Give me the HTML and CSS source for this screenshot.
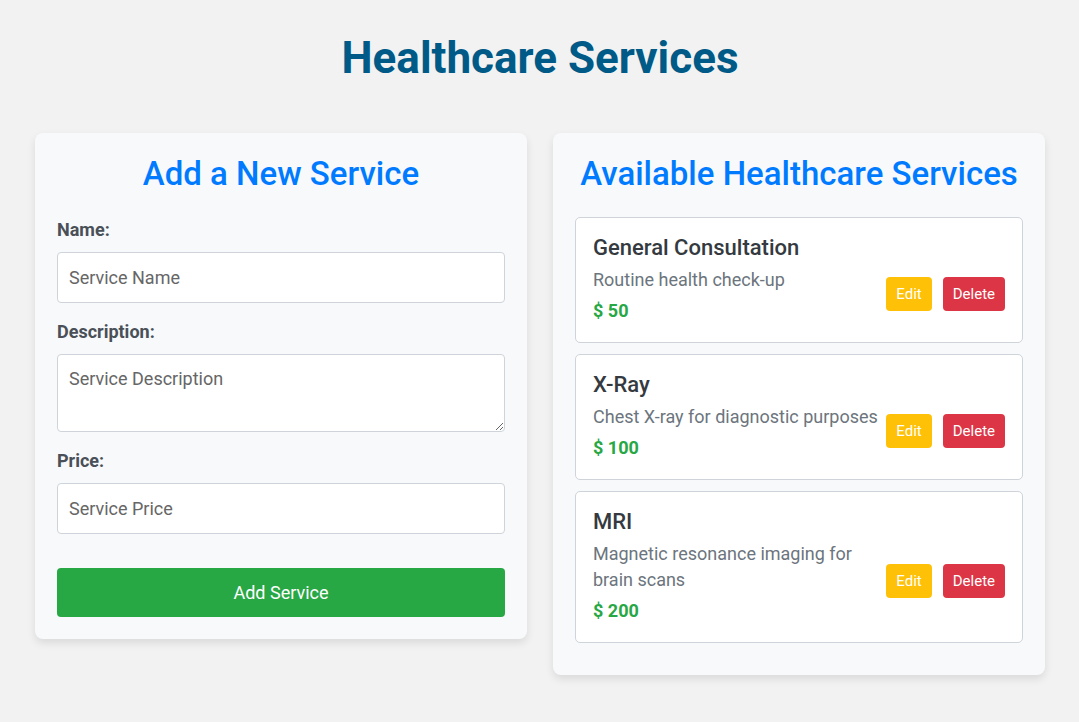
FILE: index.html
```
<!DOCTYPE html>
<html lang="en">
<head>
<meta charset="utf-8">
<meta name="viewport" content="width=device-width, initial-scale=1">
<title>Healthcare Services</title>
<link rel="stylesheet" href="styles.css">
</head>
<body>
<main class="page">
  <h1 class="page-title">Healthcare Services</h1>
  <div class="columns">
    <section class="panel">
      <h2 class="panel-title">Add a New Service</h2>
      <form class="form">
        <div class="field">
          <label class="label" for="name">Name:</label>
          <input class="control" id="name" type="text" placeholder="Service Name">
        </div>
        <div class="field">
          <label class="label" for="description">Description:</label>
          <textarea class="control control-area" id="description" placeholder="Service Description"></textarea>
        </div>
        <div class="field">
          <label class="label" for="price">Price:</label>
          <input class="control" id="price" type="text" placeholder="Service Price">
        </div>
        <button class="submit" type="submit">Add Service</button>
      </form>
    </section>
    <section class="panel">
      <h2 class="panel-title">Available Healthcare Services</h2>
      <ul class="services">
        <li class="service">
          <div class="info">
            <h3 class="service-name">General Consultation</h3>
            <p class="service-text">Routine health check-up</p>
            <p class="service-price">$ 50</p>
          </div>
          <div class="actions">
            <button class="btn btn-edit" type="button">Edit</button>
            <button class="btn btn-delete" type="button">Delete</button>
          </div>
        </li>
        <li class="service">
          <div class="info">
            <h3 class="service-name">X-Ray</h3>
            <p class="service-text">Chest X-ray for diagnostic purposes</p>
            <p class="service-price">$ 100</p>
          </div>
          <div class="actions">
            <button class="btn btn-edit" type="button">Edit</button>
            <button class="btn btn-delete" type="button">Delete</button>
          </div>
        </li>
        <li class="service">
          <div class="info">
            <h3 class="service-name">MRI</h3>
            <p class="service-text">Magnetic resonance imaging for brain scans</p>
            <p class="service-price">$ 200</p>
          </div>
          <div class="actions">
            <button class="btn btn-edit" type="button">Edit</button>
            <button class="btn btn-delete" type="button">Delete</button>
          </div>
        </li>
      </ul>
    </section>
  </div>
</main>
</body>
</html>
```
FILE: styles.css
```
* {
  box-sizing: border-box;
}

body {
  margin: 0;
  background: #f2f2f2;
  color: #343a40;
  font-family: Roboto, "Liberation Sans", sans-serif;
  font-size: 18px;
  line-height: 26px;
}

h1, h2, h3, p, ul {
  margin: 0;
  padding: 0;
}

.page {
  padding: 30px 34px 46px 35px;
}

.page-title {
  margin-bottom: 46px;
  color: #005a87;
  font-size: 44px;
  font-weight: 700;
  line-height: 57px;
  text-align: center;
}

.columns {
  display: grid;
  grid-template-columns: 1fr 1fr;
  gap: 26px;
  align-items: start;
}

.panel {
  padding: 22px;
  border-radius: 8px;
  background: #f8f9fb;
  box-shadow: 0 4px 8px rgba(0, 0, 0, 0.1);
}

.panel-title {
  margin-bottom: 24px;
  color: #007bff;
  font-size: 33px;
  font-weight: 500;
  line-height: 38px;
  text-align: center;
}

.form {
  display: flex;
  flex-direction: column;
  gap: 16px;
}

.label {
  display: block;
  margin-bottom: 9px;
  color: #495057;
  font-weight: 700;
}

.control {
  display: block;
  width: 100%;
  height: 51px;
  padding: 11px;
  border: 1px solid #ced4da;
  border-radius: 4px;
  background: #fff;
  color: #495057;
  font: inherit;
}

.control::placeholder {
  color: #666;
}

.control-area {
  height: 78px;
  resize: vertical;
}

.submit {
  width: 100%;
  height: 49px;
  margin-top: 18px;
  border: 0;
  border-radius: 4px;
  background: #28a745;
  color: #fff;
  font: inherit;
}

.services {
  display: grid;
  gap: 11px;
  padding-bottom: 10px;
  list-style: none;
}

.service {
  display: flex;
  align-items: center;
  justify-content: space-between;
  gap: 4px;
  padding: 17px 17px 18px;
  border: 1px solid #ced4da;
  border-radius: 5px;
  background: #fff;
}

.info {
  max-width: 288px;
}

.service-name {
  margin-bottom: 6px;
  color: #343a40;
  font-size: 22px;
  font-weight: 500;
  line-height: 26px;
}

.service-text {
  margin-bottom: 5px;
  color: #6c757d;
}

.service-price {
  color: #28a745;
  font-weight: 700;
}

.actions {
  display: flex;
  flex-shrink: 0;
  gap: 11px;
  padding-top: 28px;
}

.btn {
  height: 34px;
  padding: 0 10px;
  border: 0;
  border-radius: 4px;
  color: #fff;
  font: inherit;
  font-size: 15px;
}

.btn-edit {
  background: #ffc107;
}

.btn-delete {
  background: #dc3545;
}
```
